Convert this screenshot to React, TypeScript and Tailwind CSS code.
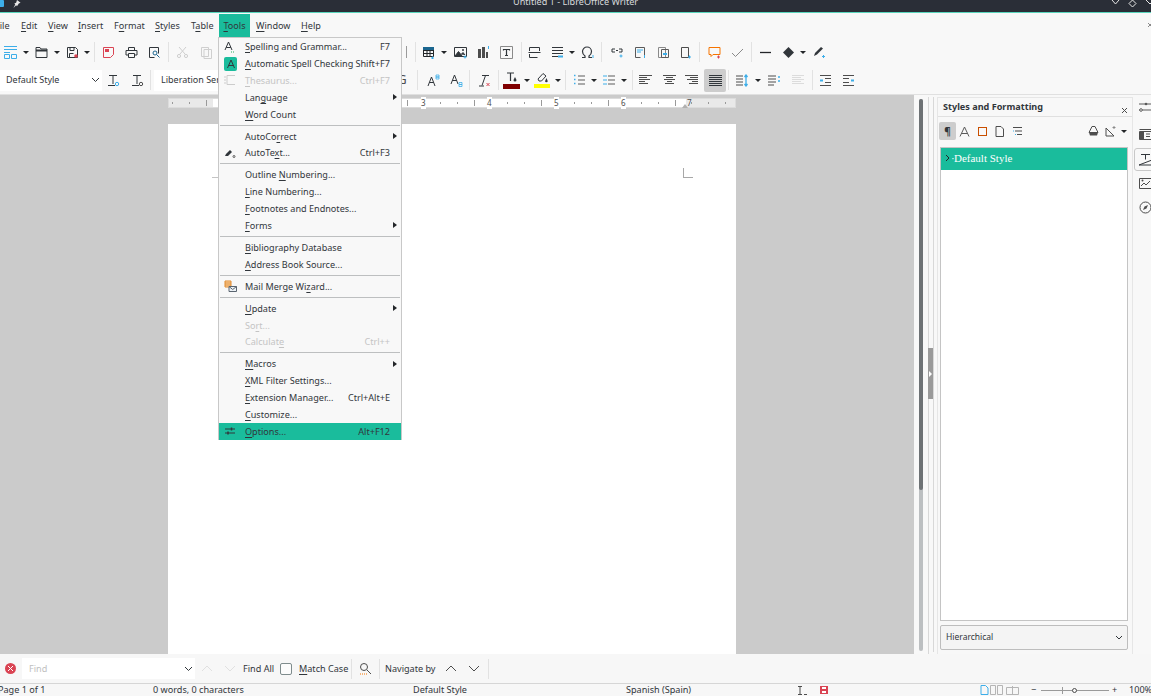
import React from "react";

const TEAL = "#1abc9c";
const BLUE = "#3daee9";

function U({ children }: { children: React.ReactNode }) {
    return <span className="underline decoration-1 underline-offset-2">{children}</span>;
}

function Cell({ w, children }: { w: string; children?: React.ReactNode }) {
    return <div className={`${w} h-full shrink-0 flex items-center justify-center`}>{children}</div>;
}

function Sep() {
    return <div className="w-px h-[20px] shrink-0 bg-[#e2e2e2]" />;
}

function Dd() {
    return <div className="w-0 h-0 border-x-[3px] border-x-transparent border-t-[3px] border-t-[#232629]" />;
}

function Ico({ children, size = 13, box = 13, cls = "text-[#31363b]" }: { children: React.ReactNode; size?: number; box?: number; cls?: string }) {
    return (
        <svg width={size} height={size} viewBox={`0 0 ${box} ${box}`} fill="none" stroke="currentColor" strokeWidth="1" className={`shrink-0 ${cls}`}>
            {children}
        </svg>
    );
}

const Plus = ({ x = 10, y = 11 }: { x?: number; y?: number }) => (
    <path d={`M${x - 1.5} ${y}h3M${x} ${y - 1.5}v3`} stroke={BLUE} />
);

// alignment style glyph: rows of lines
function Lines({ rows, cls = "text-[#4d4d4d]" }: { rows: [number, number][]; cls?: string }) {
    return (
        <Ico cls={cls}>
            {rows.map((r, i) => (
                <path key={i} d={`M${r[0]} ${1.5 + i * 2}H${r[1]}`} />
            ))}
        </Ico>
    );
}

function ToolbarOne() {
    return (
        <div className="h-[28px] flex items-center bg-[#f8f8f8]">
            <Cell w="w-[20px]">
                <Ico size={15} box={15}>
                    <path d="M1 1.5h13M1 4.5h13M1 7.5h6" stroke={BLUE} />
                    <path d="M1.5 9.5h5v4h-5zM8.5 9.5h5v4h-5z" stroke={BLUE} />
                </Ico>
            </Cell>
            <Cell w="w-[12px]"><Dd /></Cell>
            <Cell w="w-[18px]">
                <Ico><path d="M1 11.5v-10h4l1 1.5h6v8.5z" /><path d="M1 4.5h11" strokeWidth="2" /></Ico>
            </Cell>
            <Cell w="w-[14px]"><Dd /></Cell>
            <Cell w="w-[16px]">
                <Ico>
                    <path d="M1.5 1.5h8l2 2v8h-10z" />
                    <path d="M4 1.5v3h4v-3M3.5 11.5v-4h4" />
                    <circle cx="10" cy="10" r="1.8" fill="#da4453" stroke="none" />
                </Ico>
            </Cell>
            <Cell w="w-[14px]"><Dd /></Cell>
            <Sep />
            <Cell w="w-[26px]">
                <Ico cls="text-[#da4453]">
                    <path d="M1.5 1.5h10v7l-3 3h-7z" />
                    <path d="M3 3h4v3H3z" fill="#da4453" stroke="none" />
                </Ico>
            </Cell>
            <Cell w="w-[20px]">
                <Ico>
                    <path d="M3.5 4V1.5h6V4M1 9V4.5h11V9h-2M3 9H1M3.5 7.5h6v4h-6z" />
                </Ico>
            </Cell>
            <Cell w="w-[27px]">
                <Ico>
                    <path d="M1.5 11.5v-10h9v6" />
                    <circle cx="7" cy="7" r="2" stroke="#1b668f" />
                    <path d="M8.5 8.5l3 3" stroke="#1b668f" />
                    <path d="M1.5 11.5h5" />
                </Ico>
            </Cell>
            <Sep />
            <Cell w="w-[26px]">
                <Ico cls="text-[#cfcfcf]"><path d="M3 1l6 7M10 1L4 8" /><circle cx="3" cy="10" r="1.6" /><circle cx="10" cy="10" r="1.6" /></Ico>
            </Cell>
            <Cell w="w-[22px]">
                <Ico cls="text-[#cfcfcf]"><path d="M1.5 1.5h7v9h-7zM4 3.5h7.5v9H4z" /></Ico>
            </Cell>
            <div className="w-[187px] shrink-0" />
            <div className="w-[11px] shrink-0 h-[12px] flex">
                <div className="w-[1px] h-full ml-[2px] bg-[#9a9a9a]" />
            </div>
            <Sep />
            <Cell w="w-[24px]">
                <Ico>
                    <path d="M1.5 1.5h10v9h-10zM1.5 4.5h10M1.5 7.5h10M5 1.5v9M8 1.5v9" stroke="#232629" />
                    <path d="M1 1h11v3H1z" fill="#1b668f" stroke="none" />
                    <path d="M9 12h3M10.5 10.5v3" stroke={BLUE} />
                </Ico>
            </Cell>
            <Cell w="w-[8px]"><Dd /></Cell>
            <Cell w="w-[24px]">
                <Ico>
                    <path d="M.5 1.5h12v9H.5z" />
                    <path d="M1 10l3.5-4.5L8 10M7 8.5l2-2 2 2.5" fill="#31363b" />
                    <circle cx="9" cy="4" r="1" fill="#31363b" stroke="none" />
                    <Plus x={11} y={11} />
                </Ico>
            </Cell>
            <Cell w="w-[22px]">
                <Ico>
                    <path d="M1 3h3v9H1zM5 1h3v11H5z" fill="#4d4d4d" stroke="none" />
                    <path d="M9 6h2v6H9z" fill="#4d4d4d" stroke="none" />
                    <path d="M11.5 0v3" stroke={BLUE} />
                </Ico>
            </Cell>
            <Cell w="w-[24px]">
                <Ico>
                    <path d="M.5.5h12v12H.5z" stroke="#8a8a8a" />
                    <path d="M3.5 4.5v-1h6v1M6.5 3.5v6M5 9.5h3" strokeWidth="1.2" />
                </Ico>
            </Cell>
            <div className="w-[3px] shrink-0" />
            <Sep />
            <Cell w="w-[24px]">
                <Ico><path d="M1.5 5V1.5h10V5M1.5 8v3.5h8M.5 6.5h12" /></Ico>
            </Cell>
            <Cell w="w-[22px]">
                <Ico>
                    <path d="M1 1.5h11M1 4.5h11M1 7.5h11M1 10.5h6" />
                    <path d="M7 10.5h5" stroke={BLUE} strokeWidth="2" />
                </Ico>
            </Cell>
            <Cell w="w-[8px]"><Dd /></Cell>
            <Cell w="w-[22px]">
                <Ico>
                    <path d="M1 11.5h3V10C2.5 9 1.5 7.5 1.5 5.5 1.5 3 3.5 1 6 1s4.5 2 4.5 4.5c0 2-1 3.5-2.5 4.5v1.5h3" strokeWidth="1.2" />
                    <path d="M12 9v3" stroke={BLUE} />
                </Ico>
            </Cell>
            <div className="w-[3px] shrink-0" />
            <Sep />
            <Cell w="w-[30px]">
                <Ico>
                    <path d="M4 3H1v3h3M8 3h3v3H8M5 4.5h2" />
                    <Plus x={10} y={10} />
                </Ico>
            </Cell>
            <Cell w="w-[16px]">
                <Ico>
                    <path d="M1.5 1.5h9v9M1.5 1.5v10h5" stroke="#5a5a5a" />
                    <path d="M3 4h6M3 6h4" stroke={BLUE} />
                    <path d="M10.5 9v3" stroke={BLUE} />
                </Ico>
            </Cell>
            <Cell w="w-[30px]">
                <Ico>
                    <path d="M1.5 1.5h7v10h-7z" stroke="#8a8a8a" />
                    <path d="M4.5 3.5h7v8h-7z" stroke="#5a5a5a" />
                    <path d="M6 8h4" stroke={BLUE} strokeWidth="2" />
                </Ico>
            </Cell>
            <Cell w="w-[14px]">
                <Ico>
                    <path d="M2.5 1.5h7v10h-7z" stroke="#4d4d4d" />
                    <Plus x={10.5} y={11} />
                </Ico>
            </Cell>
            <div className="w-[7px] shrink-0" />
            <Sep />
            <Cell w="w-[28px]">
                <Ico cls="text-[#f67400]">
                    <path d="M1 1.5h11v7H5l-2 2v-2H1z" />
                    <path d="M9 11h3M10.5 9.5v3" stroke="#da4453" />
                </Ico>
            </Cell>
            <Cell w="w-[18px]">
                <Ico cls="text-[#8a8a8a]"><path d="M1 7l3.5 3.5L12 3" /></Ico>
            </Cell>
            <div className="w-[5px] shrink-0" />
            <Sep />
            <Cell w="w-[26px]">
                <Ico><path d="M1 6.5h11" strokeWidth="1.3" stroke="#232629" /></Ico>
            </Cell>
            <Cell w="w-[20px]">
                <Ico><path d="M6.5 1l5.5 5.5-5.5 5.5L1 6.5z" fill="#31363b" stroke="none" /></Ico>
            </Cell>
            <Cell w="w-[10px]"><Dd /></Cell>
            <Cell w="w-[22px]">
                <Ico>
                    <path d="M1 10l1-3 6-6 2 1.5-6 6z" fill="#31363b" stroke="none" />
                    <path d="M10.5 9v3M9 10.5h3" stroke={BLUE} />
                </Ico>
            </Cell>
        </div>
    );
}

function TextStyleIcon({ badge }: { badge: string }) {
    return (
        <Ico>
            <path d="M2 1.5h8M6 1.5V10M1 11.5h7" />
            <circle cx="10" cy="10" r="1.7" stroke={badge} />
        </Ico>
    );
}

function ToolbarTwo() {
    return (
        <div className="h-[28px] flex items-center bg-[#f8f8f8]">
            <div className="w-[102px] h-[21px] shrink-0 bg-white flex items-center justify-between pl-[6px] pr-[2px] text-[9px] text-[#31363b]">
                <span>Default Style</span>
                <svg width="9" height="6" viewBox="0 0 9 6" fill="none" stroke="#31363b"><path d="M1 1l3.5 3.5L8 1" /></svg>
            </div>
            <Cell w="w-[23px]"><TextStyleIcon badge={BLUE} /></Cell>
            <Cell w="w-[24px]"><TextStyleIcon badge="#4d4d4d" /></Cell>
            <div className="w-px shrink-0" />
            <Sep />
            <div className="w-[3px] shrink-0" />
            <div className="w-[86px] h-[21px] shrink-0 bg-white flex items-center pl-[7px] text-[9px] text-[#31363b] whitespace-nowrap overflow-hidden">
                Liberation Serif
            </div>
            <div className="w-[156px] shrink-0" />
            <Cell w="w-[12px]">
                <span className="text-[13px] text-[#4d4d4d]">G</span>
            </Cell>
            <div className="w-[9px] shrink-0" />
            <Sep />
            <Cell w="w-[31px]">
                <Ico>
                    <path d="M1 12L4.5 3 8 12M2.3 8.5h4.4" />
                    <path d="M9 1h3v2H9zM9 3h3v2H9z" stroke={BLUE} strokeWidth=".8" />
                </Ico>
            </Cell>
            <Cell w="w-[15px]">
                <Ico>
                    <path d="M1 10L4.5 1 8 10M2.3 6.5h4.4" />
                    <path d="M9 8.5h3v2H9zM9 10.5h3v2H9z" stroke={BLUE} strokeWidth=".8" />
                </Ico>
            </Cell>
            <div className="w-[5px] shrink-0" />
            <Sep />
            <Cell w="w-[28px]">
                <Ico>
                    <path d="M4 1.5h7M7.5 1.5L4 11.5M1 12h5" />
                    <path d="M8.5 9l3 3M11.5 9l-3 3" stroke="#da4453" />
                </Ico>
            </Cell>
            <Sep />
            <Cell w="w-[25px]">
                <div className="flex flex-col items-center w-[17px]">
                    <Ico size={11} box={11}>
                        <path d="M1 1h7M4.5 1v8" strokeWidth="1.2" />
                        <path d="M9 5l1.5 3a1.5 1.5 0 1 1-3 0z" fill="#31363b" stroke="none" />
                    </Ico>
                    <div className="w-[17px] h-[5px] mt-[1px] bg-[#800000]" />
                </div>
            </Cell>
            <Cell w="w-[6px]"><Dd /></Cell>
            <Cell w="w-[24px]">
                <div className="flex flex-col items-center w-[16px]">
                    <Ico size={11} box={11}>
                        <path d="M1 7l5-5.5 3 2.5-4.5 5H2z" />
                        <path d="M9.5 6l1 2.5a1.2 1.2 0 1 1-2.2 0z" fill="#31363b" stroke="none" />
                    </Ico>
                    <div className="w-[16px] h-[4px] mt-[1px] bg-[#ffff00]" />
                </div>
            </Cell>
            <Cell w="w-[8px]"><Dd /></Cell>
            <div className="w-[3px] shrink-0" />
            <Sep />
            <Cell w="w-[26px]">
                <Ico>
                    <path d="M5 2h7M5 6h7M5 10h7" stroke="#5a5a5a" />
                    <path d="M1 1.5h1.5M1 5.5h1.5M1 9.5h1.5" stroke={BLUE} strokeWidth="1.5" />
                </Ico>
            </Cell>
            <Cell w="w-[4px]"><Dd /></Cell>
            <Cell w="w-[26px]">
                <Ico>
                    <path d="M5 2h7M5 6h7M5 10h7" stroke="#5a5a5a" />
                    <path d="M1 1v2M3 1v2M1 5v2M3 5v2M1 9v2M3 9v2" stroke={BLUE} />
                </Ico>
            </Cell>
            <Cell w="w-[4px]"><Dd /></Cell>
            <div className="w-[6px] shrink-0" />
            <Sep />
            <Cell w="w-[25px]"><Lines rows={[[0, 13], [0, 8], [0, 11], [0, 6], [0, 9]]} /></Cell>
            <Cell w="w-[22px]"><Lines rows={[[0, 13], [3, 10], [1, 12], [4, 9], [2, 11]]} /></Cell>
            <Cell w="w-[23px]"><Lines rows={[[0, 13], [5, 13], [2, 13], [7, 13], [4, 13]]} /></Cell>
            <div className="w-px shrink-0" />
            <div className="w-[22px] h-[23px] shrink-0 flex items-center justify-center bg-[#cdcdcd] rounded-[2px]">
                <Lines cls="text-[#31363b]" rows={[[0, 13], [0, 13], [0, 13], [0, 13], [0, 13], [0, 13]]} />
            </div>
            <div className="w-[2px] shrink-0" />
            <Sep />
            <Cell w="w-[27px]">
                <Ico>
                    <path d="M0 2h7M0 5h7M0 8h7M0 11h7" stroke="#4d4d4d" />
                    <path d="M10 1v11M8.5 3L10 1l1.5 2M8.5 10L10 12l1.5-2" stroke={BLUE} strokeWidth="1.3" />
                </Ico>
            </Cell>
            <Cell w="w-[4px]"><Dd /></Cell>
            <Cell w="w-[28px]">
                <Ico>
                    <path d="M0 2h8M0 5h8M0 8h8M0 11h6" stroke="#4d4d4d" />
                    <path d="M10 3h2M10 7h2" stroke={BLUE} strokeWidth="1.5" />
                </Ico>
            </Cell>
            <Cell w="w-[20px]">
                <Lines cls="text-[#dcdcdc]" rows={[[0, 12], [0, 9], [0, 12], [0, 9], [0, 12]]} />
            </Cell>
            <div className="w-[4px] shrink-0" />
            <Sep />
            <Cell w="w-[25px]">
                <Ico>
                    <path d="M1 1.5h11M1 11.5h11M6 4.5h6M6 8.5h6" stroke="#4d4d4d" />
                    <path d="M1 6.5h3" stroke={BLUE} strokeWidth="2" />
                </Ico>
            </Cell>
            <Cell w="w-[21px]">
                <Ico>
                    <path d="M1 1.5h11M1 11.5h11M1 4.5h6M1 8.5h6" stroke="#4d4d4d" />
                    <path d="M9 6.5h3" stroke={BLUE} strokeWidth="2" />
                </Ico>
            </Cell>
        </div>
    );
}

const TICKS = Array.from({ length: 34 }, (_, i) => i);

function Ruler() {
    return (
        <div className="h-[29px] shrink-0 flex">
            <div className="w-[168px] shrink-0" />
            <div className="w-[568px] h-[10px] mt-[3px] relative bg-[#e9e9e9] border border-[#dcdcdc] flex">
                <div className="w-[44px] shrink-0" />
                <div className="w-[473px] shrink-0 bg-white" />
                {TICKS.map((i) => (
                    <div
                        key={i}
                        className={`absolute w-px bg-[#9a9a9a] ${i % 4 === 2 ? "top-[1px] h-[6px]" : "top-[3px] h-[2px]"}`}
                        style={{ left: 3 + i * 16.75 }}
                    />
                ))}
                <span className="absolute left-[252px] top-[-2px] text-[8px] leading-[12px] bg-white text-[#4d4d4d]">3</span>
                <span className="absolute left-[318px] top-[-2px] text-[8px] leading-[12px] bg-white text-[#4d4d4d]">4</span>
                <span className="absolute left-[385px] top-[-2px] text-[8px] leading-[12px] bg-white text-[#4d4d4d]">5</span>
                <span className="absolute left-[452px] top-[-2px] text-[8px] leading-[12px] bg-white text-[#4d4d4d]">6</span>
                <span className="absolute left-[518px] top-[-2px] text-[8px] leading-[12px] text-[#4d4d4d]">7</span>
                <div className="absolute left-[513px] top-[5px] w-0 h-0 border-x-[3px] border-x-transparent border-b-[4px] border-b-[#b0b0b0]" />
            </div>
        </div>
    );
}

function Page() {
    return (
        <div className="flex-1 flex">
            <div className="w-[168px] shrink-0" />
            <div className="w-[568px] bg-white relative">
                <div className="absolute left-[44px] top-[53px] w-[6px] h-px bg-[#c4c4c4]" />
                <div className="absolute left-[515px] top-[44px] w-[10px] h-[10px] border-l border-b border-[#a8a8a8]" />
            </div>
        </div>
    );
}

type Row = { label: React.ReactNode; key?: string; dis?: boolean; arrow?: boolean; icon?: React.ReactNode; chk?: boolean; hi?: boolean };

const MENU: (Row | "sep")[] = [
    {
        label: <><U>S</U>pelling and Grammar...</>,
        key: "F7",
        icon: (
            <Ico size={12} box={12}>
                <path d="M1 9L4.5 1 8 9M2.2 6.5h4.6" />
                <path d="M7 11h4" stroke="#27ae60" strokeDasharray="1 1" />
            </Ico>
        ),
    },
    {
        label: <><U>A</U>utomatic Spell Checking</>,
        key: "Shift+F7",
        chk: true,
        icon: (
            <Ico size={10} box={10}><path d="M1.5 9L5 1l3.5 8M2.7 6.5h4.6" /></Ico>
        ),
    },
    {
        label: <><U>T</U>hesaurus...</>,
        key: "Ctrl+F7",
        dis: true,
        icon: (
            <Ico size={12} box={12} cls="text-[#cccccc]"><path d="M3 1.5h8M3 10.5h8M3 1.5v9M0 3h2M0 6h2M0 9h2" /></Ico>
        ),
    },
    { label: <>Lan<U>g</U>uage</>, arrow: true },
    { label: <><U>W</U>ord Count</> },
    "sep",
    { label: <>AutoCo<U>r</U>rect</>, arrow: true },
    {
        label: <>AutoTe<U>x</U>t...</>,
        key: "Ctrl+F3",
        icon: (
            <Ico size={12} box={12}>
                <path d="M1 9l1-2 4-4 2 2-4 4z" fill="#31363b" stroke="none" />
                <circle cx="10" cy="9.5" r="1" stroke="#5a5a5a" />
            </Ico>
        ),
    },
    "sep",
    { label: <>Outline <U>N</U>umbering...</> },
    { label: <><U>L</U>ine Numbering...</> },
    { label: <><U>F</U>ootnotes and Endnotes...</> },
    { label: <><U>F</U>orms</>, arrow: true },
    "sep",
    { label: <><U>B</U>ibliography Database</> },
    { label: <><U>A</U>ddress Book Source...</> },
    "sep",
    {
        label: <>Mail Merge Wi<U>z</U>ard...</>,
        icon: (
            <Ico size={13} box={13}>
                <path d="M1 1h6v6H1z" fill="#fbd6a8" stroke="#e08a2e" />
                <path d="M1 3h6M1 5h6" stroke="#e08a2e" />
                <path d="M5 6.5h7.5v5H5z" fill="#eef3f7" stroke="#5a6570" />
                <path d="M5 6.5l3.7 3 3.8-3" stroke="#5a6570" />
            </Ico>
        ),
    },
    "sep",
    { label: <><U>U</U>pdate</>, arrow: true },
    { label: <>So<U>r</U>t...</>, dis: true },
    { label: <>Calculat<U>e</U></>, key: "Ctrl++", dis: true },
    "sep",
    { label: <><U>M</U>acros</>, arrow: true },
    { label: <><U>X</U>ML Filter Settings...</> },
    { label: <><U>E</U>xtension Manager...</>, key: "Ctrl+Alt+E" },
    { label: <><U>C</U>ustomize...</> },
    {
        label: <><U>O</U>ptions...</>,
        key: "Alt+F12",
        hi: true,
        icon: (
            <Ico size={12} box={12}>
                <path d="M1 4h10M1 8h10" />
                <path d="M7.5 2.5v3M4 6.5v3" strokeWidth="1.5" />
            </Ico>
        ),
    },
];

function ToolsMenu() {
    return (
        <div className="absolute left-[218px] top-[37px] w-[184px] h-[403px] pt-[0.5px] bg-[#f8f8f8] border border-[#c8c8c8] text-[9.1px] leading-none text-[#31363b] z-10">
            {MENU.map((row, i) =>
                row === "sep" ? (
                    <div key={i} className="h-[5.25px] flex items-center px-[1px]">
                        <div className="w-full h-px bg-[#bdbfc0]" />
                    </div>
                ) : (
                    <div
                        key={i}
                        className={`h-[16.8px] flex items-center ${row.hi ? "bg-[#1abc9c]" : ""} ${row.dis ? "text-[#c4c4c4]" : ""}`}
                    >
                        <div className="w-[26px] shrink-0 flex justify-start pl-[5px]">
                            {row.chk ? (
                                <div className="w-[13px] h-[14px] rounded-[2px] flex items-center justify-center bg-[#1abc9c]">{row.icon}</div>
                            ) : (
                                row.icon
                            )}
                        </div>
                        <span className="whitespace-nowrap">{row.label}</span>
                        <div className="flex-1" />
                        {row.key && <span className="whitespace-nowrap pr-[11px]">{row.key}</span>}
                        {row.arrow && (
                            <div className="mr-[4px] w-0 h-0 border-y-[3px] border-y-transparent border-l-[4px] border-l-[#232629]" />
                        )}
                    </div>
                )
            )}
        </div>
    );
}

function SidePanel() {
    return (
        <div className="flex-1 flex min-w-0">
            <div className="w-[5px] shrink-0 mt-[2px] border-l border-[#d8d8d8] flex flex-col pt-[251px]">
                <div className="w-[5px] -ml-px h-[51px] bg-[#9a9a9a] flex items-center justify-center">
                    <div className="w-0 h-0 border-y-[3px] border-y-transparent border-l-[3px] border-l-white" />
                </div>
            </div>
            <div className="w-px shrink-0 my-[2px] bg-[#d8d8d8]" />
            <div className="w-[3px] shrink-0" />
            <div className="w-[196px] shrink-0 flex flex-col pb-[1px] mt-[2px]">
                <div className="flex-1 flex flex-col border border-[#e6e6e6] px-[2px] pb-[4px]">
                    <div className="h-[19px] shrink-0 -mx-[2px] px-[5px] flex items-center justify-between border-b border-[#e0e0e0]">
                        <span className="font-bold text-[9.1px] text-[#31363b]">Styles and Formatting</span>
                        <svg width="7" height="7" viewBox="0 0 7 7" stroke="#4d4d4d" className="-mr-[1px] mt-[7px]"><path d="M1 1l5 5M6 1L1 6" /></svg>
                    </div>
                    <div className="h-[30px] shrink-0 flex items-center -ml-px pb-[2px]">
                        <div className="w-[17px] h-[18px] rounded-[2px] bg-[#cdcdcd] flex items-center justify-center text-[10px] font-bold text-[#31363b]">¶</div>
                        <Cell w="w-[17px]"><Ico size={11} box={11}><path d="M1 10.5L5.5 1 10 10.5M2.5 7.5h6" stroke="#5a5a5a" /></Ico></Cell>
                        <Cell w="w-[18px]"><div className="w-[9px] h-[9px] border-[1.5px] border-[#c94f00]" /></Cell>
                        <Cell w="w-[17px]"><Ico size={11} box={11}><path d="M2 .5h5l2.5 2.5v7.5H2z" stroke="#4d4d4d" /></Ico></Cell>
                        <Cell w="w-[18px]">
                            <Ico size={11} box={11}>
                                <path d="M1 1.5h9M3 5h7M5 8.5h5" stroke="#4d4d4d" />
                                <path d="M1 5h1M3 8.5h1" stroke={BLUE} />
                            </Ico>
                        </Cell>
                        <div className="flex-1" />
                        <Cell w="w-[17px]">
                            <Ico size={12} box={12}>
                                <path d="M4 1.5h3l3 6H1z" stroke="#4d4d4d" />
                                <path d="M1 7.5h9l-1 3H2z" fill="#4d4d4d" stroke="none" />
                            </Ico>
                        </Cell>
                        <Cell w="w-[17px]">
                            <Ico size={12} box={12}>
                                <path d="M1 3v8h8z" stroke="#4d4d4d" />
                                <path d="M9 1v3M7.5 2.5h3" stroke="#8a8a8a" />
                            </Ico>
                        </Cell>
                        <Cell w="w-[9px]"><Dd /></Cell>
                        <div className="w-[2px] shrink-0" />
                    </div>
                    <div className="h-[474px] shrink-0 bg-white border border-[#c4c4c4] mr-[2px]">
                        <div className="h-[22px] flex items-center pb-[2px] bg-[#1abc9c] font-['Liberation_Serif',serif] text-[11px] text-white">
                            <svg width="6" height="8" viewBox="0 0 6 8" fill="none" stroke="#232629" className="ml-[4px]"><path d="M1 1l3 3-3 3" /></svg>
                            <span className="w-[3px]">·</span>Default Style
                        </div>
                    </div>
                    <div className="h-[25px] shrink-0 mt-[4px] mr-[2px] rounded-[2px] border border-[#bdbdbd] bg-[#f4f4f4] flex items-center justify-between pl-[5px] pr-[4px] text-[8.5px] text-[#31363b]">
                        <span>Hierarchical</span>
                        <svg width="8" height="5" viewBox="0 0 8 5" fill="none" stroke="#31363b"><path d="M1 1l3 3 3-3" /></svg>
                    </div>
                </div>
            </div>
            <div className="flex-1 flex flex-col pt-[2px] pl-[1px] min-w-0 overflow-hidden">
                <div className="h-[20px] pl-[5px] flex items-center">
                    <Ico size={13} box={13}><path d="M0 3h13M0 9h13" stroke="#5a5a5a" /><circle cx="7" cy="3" r="1.3" fill="#5a5a5a" stroke="none" /><circle cx="2" cy="9" r="1.3" fill="#fff" stroke="#5a5a5a" /></Ico>
                </div>
                <div className="h-[28px] mt-[3px] pl-[5px] flex items-center">
                    <Ico size={13} box={13}><path d="M.5 1.5h12M.5 3.5h12v8H.5z" stroke="#4d4d4d" /><path d="M1 4h4v7H1z" fill="#4d4d4d" stroke="none" /><path d="M7 6h4M7 8.5h4" stroke="#4d4d4d" /></Ico>
                </div>
                <div className="h-[23px] w-[24px] pl-[4px] rounded-[3px] border border-[#c8c8c8] flex items-center">
                    <Ico size={13} box={13}><path d="M2 1.5h9M6.5 1.5v5M0 12l13-5M0 12h13V7" stroke="#31363b" /></Ico>
                </div>
                <div className="h-[24px] pl-[5px] flex items-center">
                    <Ico size={13} box={13}><path d="M.5 1.5h12v10H.5z" stroke="#4d4d4d" /><path d="M2 9l3-3 2 2 4-4" stroke="#4d4d4d" /><circle cx="3.5" cy="3.5" r="1" fill="#4d4d4d" stroke="none" /></Ico>
                </div>
                <div className="h-[24px] pl-[5px] flex items-center">
                    <Ico size={13} box={13}><circle cx="6.5" cy="6.5" r="5.5" stroke="#4d4d4d" /><path d="M9 4L7.5 7.5 4 9l1.5-3.5z" fill="#4d4d4d" stroke="none" /></Ico>
                </div>
            </div>
        </div>
    );
}

function FindBar() {
    return (
        <div className="h-[29px] shrink-0 flex items-center bg-[#f7f7f7] text-[9.1px] text-[#31363b]">
            <Cell w="w-[20px]">
                <div className="w-[11px] h-[11px] rounded-full bg-[#da4453] flex items-center justify-center">
                    <svg width="7" height="7" viewBox="0 0 7 7" stroke="#fff"><path d="M1 1l5 5M6 1L1 6" /></svg>
                </div>
            </Cell>
            <div className="w-[2px] shrink-0" />
            <div className="w-[173px] h-[21px] shrink-0 bg-white flex items-center justify-between pl-[7px] pr-[2px] text-[#c0c0c0]">
                <span>Find</span>
                <svg width="9" height="6" viewBox="0 0 9 6" fill="none" stroke="#31363b"><path d="M1 1l3.5 3.5L8 1" /></svg>
            </div>
            <Cell w="w-[24px]"><svg width="12" height="7" viewBox="0 0 12 7" fill="none" stroke="#e0e0e0"><path d="M1 6l5-5 5 5" /></svg></Cell>
            <Cell w="w-[22px]"><svg width="12" height="7" viewBox="0 0 12 7" fill="none" stroke="#e0e0e0"><path d="M1 1l5 5 5-5" /></svg></Cell>
            <span className="ml-[2px] w-[37px] shrink-0 whitespace-nowrap">Find All</span>
            <div className="w-[12px] h-[12px] shrink-0 rounded-[2px] border border-[#7f8c8d] bg-[#fcfcfc]" />
            <span className="ml-[7px] w-[52px] shrink-0 whitespace-nowrap"><U>M</U>atch Case</span>
            <Sep />
            <Cell w="w-[27px]">
                <Ico>
                    <circle cx="5" cy="5" r="3.5" stroke="#4d4d4d" />
                    <path d="M8 8l4 4" stroke="#4d4d4d" />
                    <path d="M1 12h7" stroke="#f67400" strokeDasharray="1 1" />
                </Ico>
            </Cell>
            <Sep />
            <span className="ml-[5px] w-[59px] shrink-0 whitespace-nowrap">Navigate by</span>
            <Cell w="w-[14px]"><svg width="12" height="7" viewBox="0 0 12 7" fill="none" stroke="#4d4d4d"><path d="M1 6l5-5 5 5" /></svg></Cell>
            <div className="w-[9px] shrink-0" />
            <Cell w="w-[14px]"><svg width="12" height="7" viewBox="0 0 12 7" fill="none" stroke="#4d4d4d"><path d="M1 1l5 5 5-5" /></svg></Cell>
            <div className="w-[7px] shrink-0" />
            <Sep />
        </div>
    );
}

function StatusBar() {
    return (
        <div className="h-[13px] shrink-0 flex items-center border-t border-[#d6d6d6] bg-[#f7f7f7] text-[9.1px] leading-none text-[#31363b] whitespace-nowrap overflow-hidden">
            <div className="w-[155px] shrink-0 -ml-[2px]">Page 1 of 1</div>
            <div className="w-[260px] shrink-0">0 words, 0 characters</div>
            <div className="w-[213px] shrink-0">Default Style</div>
            <div className="w-[165px] shrink-0">Spanish (Spain)</div>
            <Cell w="w-[22px]">
                <svg width="11" height="9" viewBox="0 0 11 9" fill="none" stroke="#4d4d4d"><path d="M1 .5h4M3 .5v8M1 8.5h4M7 8.5h3" /></svg>
            </Cell>
            <Cell w="w-[22px]">
                <svg width="8" height="8" viewBox="0 0 8 8"><path d="M0 0h8v8H0z" fill="#da4453" /><path d="M2 1h4v2H2zM2 5h4v2H2z" fill="#fff" /></svg>
            </Cell>
            <div className="w-[145px] shrink-0" />
            <svg width="9" height="10" viewBox="0 0 9 10" fill="none" stroke={BLUE} className="shrink-0"><path d="M1 .5h4.5L8 3v6.5H1z" /></svg>
            <svg width="13" height="10" viewBox="0 0 13 10" fill="none" stroke="#b5b5b5" className="ml-[1px] shrink-0"><path d="M.5.5h5v9h-5zM7.5.5h5v9h-5z" /></svg>
            <svg width="13" height="10" viewBox="0 0 13 10" fill="none" stroke="#b5b5b5" className="ml-[3px] shrink-0"><path d="M.5 2.5h12v7H.5zM6.5 1v8.5" /></svg>
            <div className="w-[12px] shrink-0" />
            <span className="w-[10px] shrink-0">−</span>
            <div className="w-[68px] h-px shrink-0 bg-[#9a9a9a] relative">
                <div className="absolute left-[21px] -top-[3px] w-px h-[7px] bg-[#9a9a9a]" />
                <div className="absolute left-[31px] -top-[2px] w-[5px] h-[5px] rounded-full border border-[#4d4d4d] bg-[#f7f7f7]" />
            </div>
            <span className="ml-[3px] w-[14px] shrink-0">+</span>
            <span className="ml-[3px]">100%</span>
        </div>
    );
}

export default function App() {
    return (
        <div className="relative w-[1151px] h-[696px] overflow-hidden flex flex-col bg-[#f8f8f8] font-['Noto_Sans',sans-serif]">
            {/* Title bar, cut off by the top of the capture */}
            <div className="h-[13px] shrink-0 bg-[#2a2e37] border-b border-[#5ad6bd] overflow-hidden flex items-start text-[#d8dadc]">
                <div className="w-[513px] shrink-0 flex items-start">
                    <div className="w-[4px] h-[7px] rounded-r-[1px] bg-[#3daee9]" />
                    <svg width="8" height="8" viewBox="0 0 8 9" className="ml-[9px]"><path d="M4 0l4 3-2 1-2 3-1-1-3 3 2-4-1-1 2-1z" fill="#e8e8e8" /></svg>
                </div>
                <span className="text-[9.1px] leading-[12px] -mt-[4px] whitespace-nowrap">Untitled 1 - LibreOffice Writer</span>
                <div className="flex-1" />
                <div className="flex items-start gap-[8px] -mr-[3px]">
                    <svg width="9" height="6" viewBox="0 0 9 6" fill="none" stroke="#e8e8e8"><path d="M1 0l3.5 4L8 0" /></svg>
                    <svg width="9" height="7" viewBox="0 0 9 7" fill="none" stroke="#e8e8e8"><path d="M4.5 0L8 3.5 4.5 7 1 3.5z" /></svg>
                    <svg width="9" height="6" viewBox="0 0 9 6" fill="none" stroke="#e8e8e8"><path d="M1 0l4 4 4-4" /></svg>
                </div>
            </div>

            {/* Menu bar */}
            <div className="h-[25px] shrink-0 flex items-center text-[9.1px] text-[#31363b] relative whitespace-nowrap">
                <span className="w-[26px] -ml-[5px] shrink-0"><U>F</U>ile</span>
                <span className="w-[27px] shrink-0"><U>E</U>dit</span>
                <span className="w-[30px] shrink-0"><U>V</U>iew</span>
                <span className="w-[36px] shrink-0"><U>I</U>nsert</span>
                <span className="w-[41px] shrink-0">F<U>o</U>rmat</span>
                <span className="w-[36px] shrink-0"><U>S</U>tyles</span>
                <span className="w-[28px] shrink-0">T<U>a</U>ble</span>
                <span className="w-[31px] h-[23px] shrink-0 flex items-center justify-center" style={{ background: TEAL }}><span><U>T</U>ools</span></span>
                <span className="w-[51px] pl-[6px] shrink-0"><U>W</U>indow</span>
                <span className="shrink-0"><U>H</U>elp</span>
                <svg width="6" height="6" viewBox="0 0 6 6" stroke="#8a8a8a" className="absolute right-[-2px] top-[9px]"><path d="M1 1l4 4M5 1L1 5" /></svg>
            </div>

            <ToolbarOne />
            <ToolbarTwo />

            {/* Work area */}
            <div className="flex-1 min-h-0 flex border-t border-[#e0e0e0]">
                <div className="w-[914px] shrink-0 flex flex-col bg-[#cbcbcb]">
                    <Ruler />
                    <Page />
                </div>
                <div className="w-[14px] shrink-0 flex justify-center pt-[4px] pb-[3px]">
                    <div className="w-[4px] h-full rounded-full bg-[#bcbfc1] flex">
                        <div className="w-[4px] h-[391px] rounded-full bg-[#6e7275]" />
                    </div>
                </div>
                <SidePanel />
            </div>

            <FindBar />
            <StatusBar />
            <ToolsMenu />
        </div>
    );
}
